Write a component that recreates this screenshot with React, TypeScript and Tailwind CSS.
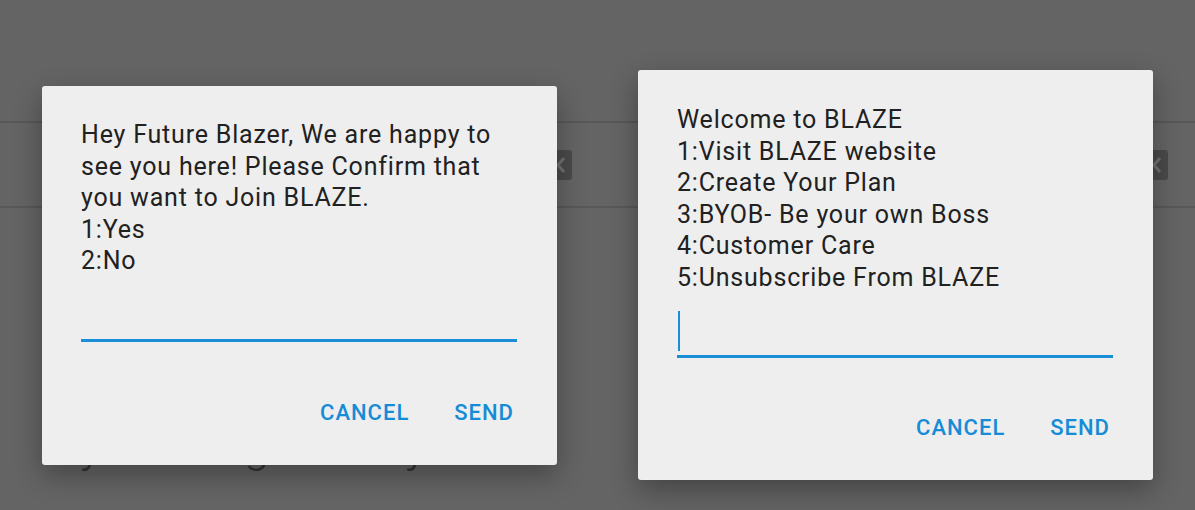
import React from 'react';

const leftLines = ['Hey Future Blazer, We are happy to see you here! Please Confirm that you want to Join BLAZE.', '1:Yes', '2:No'];

const rightLines = [
  'Welcome to BLAZE',
  '1:Visit BLAZE website',
  '2:Create Your Plan',
  '3:BYOB- Be your own Boss',
  '4:Customer Care',
  '5:Unsubscribe From BLAZE'
];

const KeyIcon = () => (
  <svg width="20" height="30" viewBox="0 0 20 30">
    <rect x="0" y="0" width="20" height="30" rx="3" fill="#4a4a4a" />
    <path d="M12 8 L6 15 L12 22" fill="none" stroke="#707070" strokeWidth="3" />
  </svg>
);

const BackgroundPage = ({ padRight, showDescenders }: { padRight: string; showDescenders?: boolean }) => (
  <div className="flex flex-col h-full pt-[121px]">
    <div className={`h-[87px] border-y-2 border-[#585858] flex items-center justify-end ${padRight}`}>
      <KeyIcon />
    </div>
    {showDescenders && (
      <div className="flex mt-[215px] pl-[80px] text-[46px] leading-none font-light text-[#333333]">
        <span>y</span>
        <span className="ml-[142px]">g</span>
        <span className="ml-[140px]">j</span>
      </div>
    )}
  </div>
);

const UssdDialog = ({ lines, focused, className }: { lines: string[]; focused?: boolean; className: string }) => (
  <div className={`absolute w-[515px] rounded-[3px] bg-[#eeeeee] shadow-[0_10px_28px_rgba(0,0,0,0.32)] flex flex-col pl-[39px] pr-[40px] ${className}`}>
    <div className="text-[25px] leading-[31.5px] tracking-[0.8px] text-[#212121]">
      {lines.map(line => (
        <p key={line}>{line}</p>
      ))}
    </div>
    <div className="mt-[15px] h-[50px] border-b-[3px] border-[#1a8fd9] flex items-end pb-[4px]">
      {focused && <div className="w-[2px] h-[40px] ml-[1px] bg-[#1a8fd9]" />}
    </div>
    <div className="mt-auto flex justify-end gap-[45px] pr-[3px] pb-[40px] text-[22px] leading-[24px] tracking-[1px] font-medium text-[#168cd6]">
      <button>CANCEL</button>
      <button>SEND</button>
    </div>
  </div>
);

export default function App() {
  return (
    <div className="w-[1195px] h-[510px] flex bg-[#646464] overflow-hidden font-['Roboto','Liberation_Sans',sans-serif]">
      <div className="relative w-[598px] h-full">
        <BackgroundPage padRight="pr-[26px]" showDescenders />
        <UssdDialog lines={leftLines} className="left-[42px] top-[86px] h-[379px] pt-[33px]" />
      </div>
      <div className="relative w-[597px] h-full">
        <BackgroundPage padRight="pr-[27px]" />
        <UssdDialog lines={rightLines} focused className="left-[40px] top-[70px] h-[410px] pt-[34px]" />
      </div>
    </div>
  );
}
